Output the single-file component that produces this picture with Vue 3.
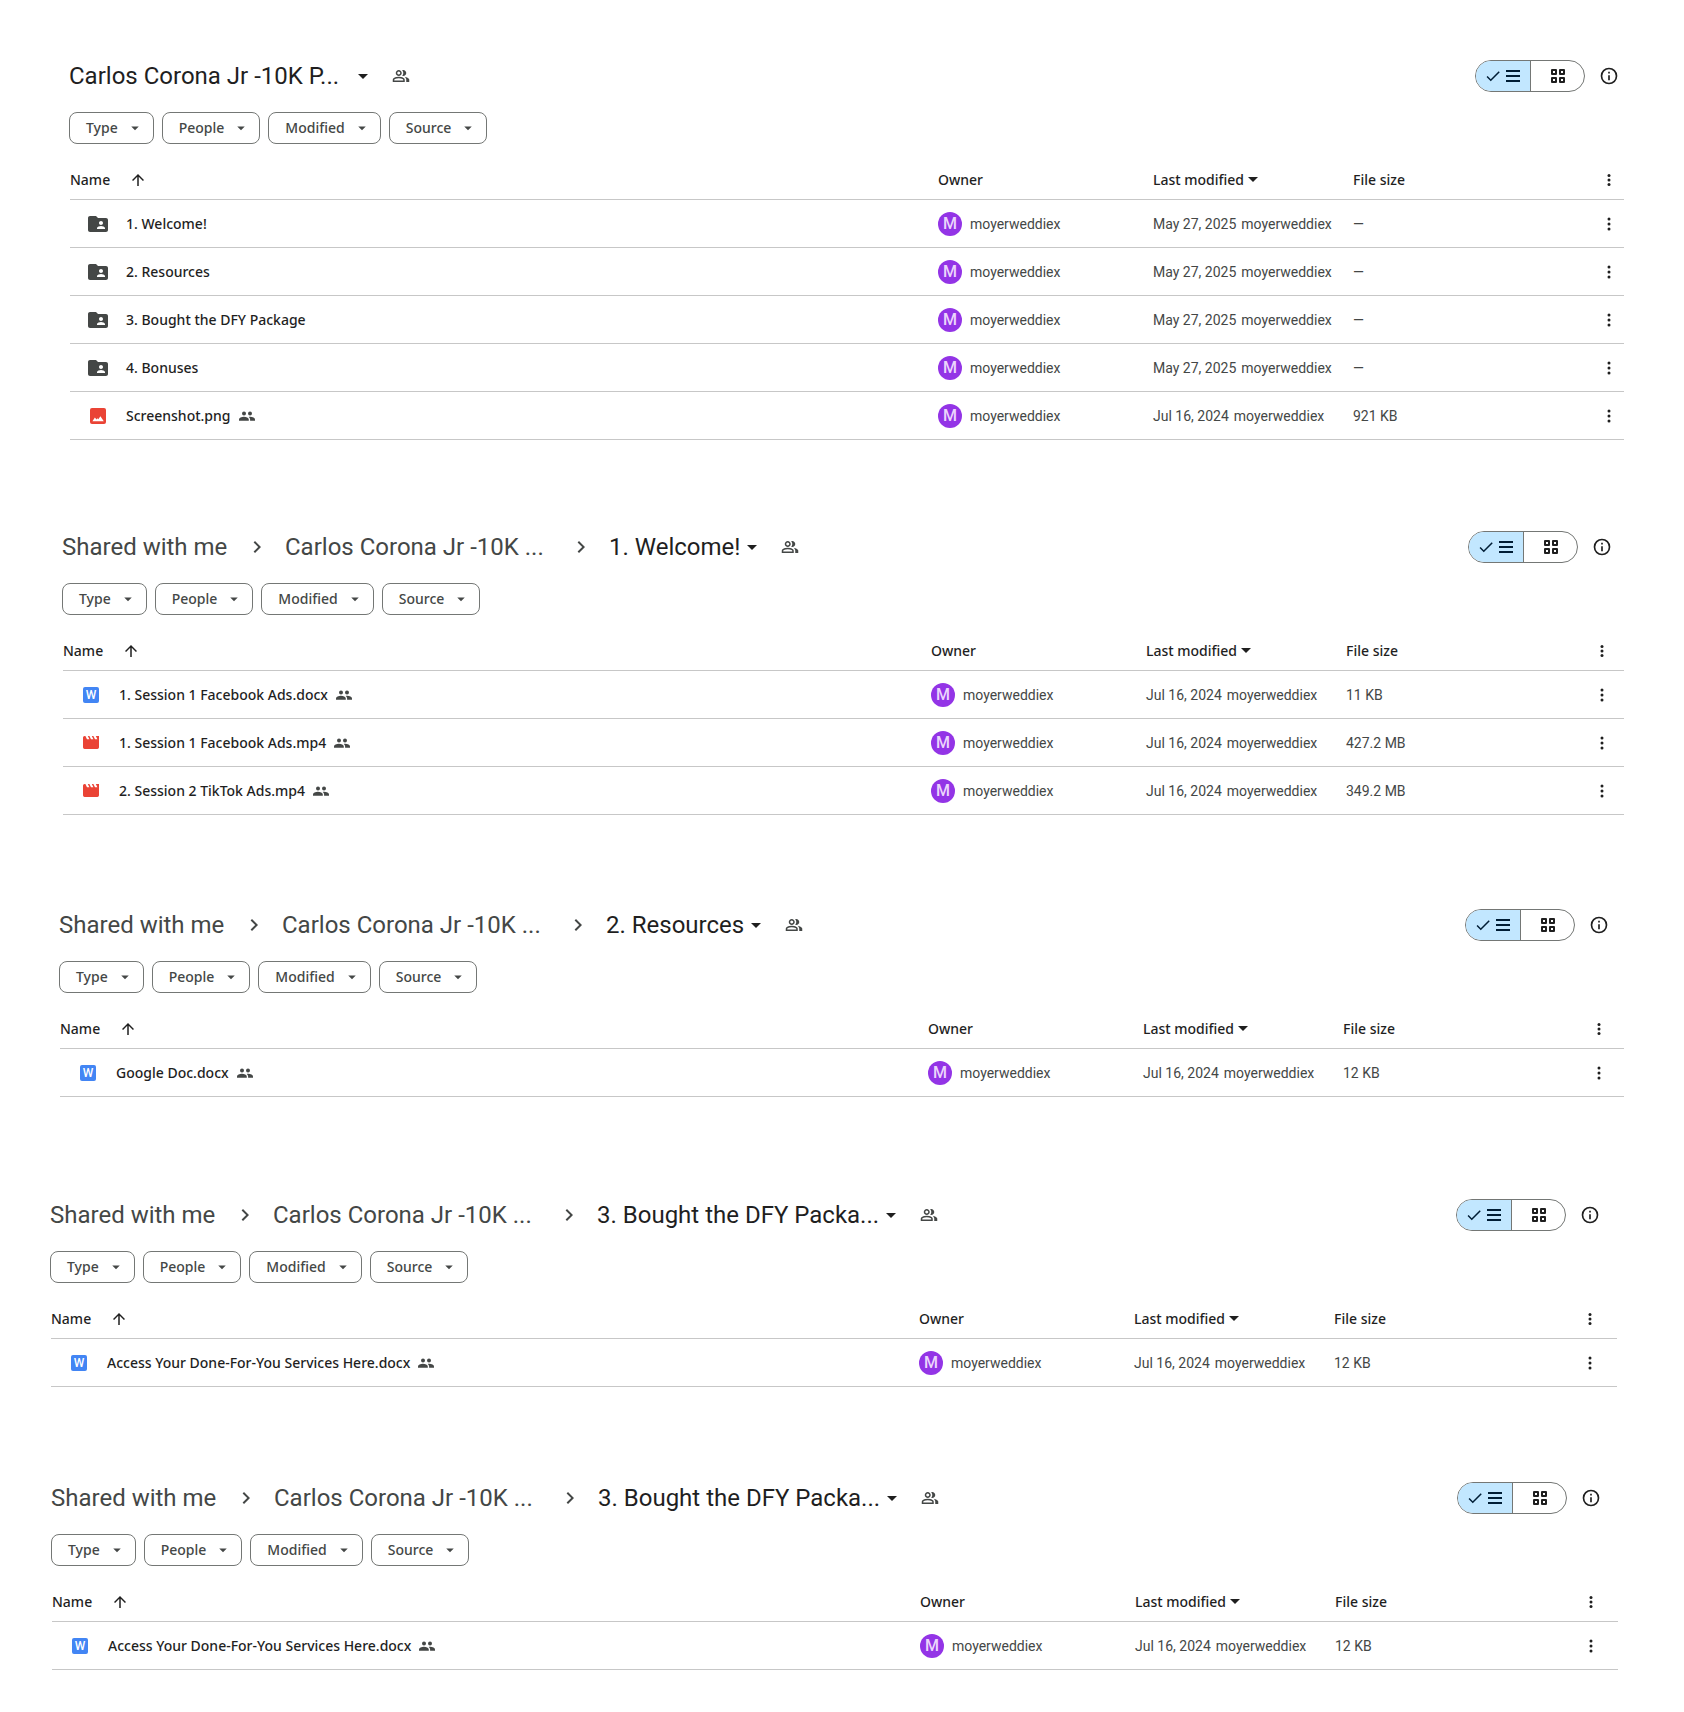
<script setup>
const filters = ['Type', 'People', 'Modified', 'Source']
const root = ['Shared with me', 'Carlos Corona Jr -10K ...']

const folder = (name) => ({ kind: 'folder', name, date: 'May 27, 2025', size: '—' })
const file = (kind, name, size) => ({ kind, name, date: 'Jul 16, 2024', size, shared: true })

const panels = [
  {
    id: 'home', path: [], title: 'Carlos Corona Jr -10K P...',
    rows: [
      folder('1. Welcome!'),
      folder('2. Resources'),
      folder('3. Bought the DFY Package'),
      folder('4. Bonuses'),
      file('image', 'Screenshot.png', '921 KB')
    ]
  },
  {
    id: 'welcome', path: root, title: '1. Welcome!',
    rows: [
      file('word', '1. Session 1 Facebook Ads.docx', '11 KB'),
      file('video', '1. Session 1 Facebook Ads.mp4', '427.2 MB'),
      file('video', '2. Session 2 TikTok Ads.mp4', '349.2 MB')
    ]
  },
  { id: 'resources', path: root, title: '2. Resources', rows: [file('word', 'Google Doc.docx', '12 KB')] },
  {
    id: 'package', path: root, title: '3. Bought the DFY Packa...',
    rows: [file('word', 'Access Your Done-For-You Services Here.docx', '12 KB')]
  },
  {
    id: 'bonuses', path: root, title: '3. Bought the DFY Packa...',
    rows: [file('word', 'Access Your Done-For-You Services Here.docx', '12 KB')]
  }
]
</script>

<template>
  <main class="page">
    <section v-for="p in panels" :key="p.id" class="panel" :class="p.id">
      <header class="bar">
        <nav class="crumbs" aria-label="Folder path">
          <template v-for="c in p.path" :key="c">
            <a href="#" class="crumb">{{ c }}</a>
            <svg class="chevron" viewBox="0 0 24 24" aria-hidden="true"><path d="M10 6 8.6 7.4l4.6 4.6-4.6 4.6L10 18l6-6z" /></svg>
          </template>
          <button type="button" class="current">
            <span class="title">{{ p.title }}</span>
            <svg viewBox="0 0 24 24" width="24" height="24" aria-hidden="true"><path d="m7 10 5 5 5-5z" /></svg>
          </button>
          <button type="button" class="share" aria-label="Manage access">
            <svg viewBox="0 0 24 24" width="18" height="18" aria-hidden="true"><path d="M1 20v-2.8q0-.85.438-1.562T2.6 14.55q1.55-.775 3.15-1.162T9 13t3.25.388 3.15 1.162q.725.375 1.163 1.088T17 17.2V20zm18 0v-3q0-1.1-.612-2.113T16.65 13.15q1.275.15 2.4.513t2.1.887q.9.5 1.375 1.112T23 17v3zM9 12q-1.65 0-2.825-1.175T5 8t1.175-2.825T9 4t2.825 1.175T13 8t-1.175 2.825T9 12m10-4q0 1.65-1.175 2.825T15 12q-.275 0-.7-.062t-.7-.138q.675-.8 1.038-1.775T15 8t-.362-2.025T13.6 4.2q.35-.125.7-.163T15 4q1.65 0 2.825 1.175T19 8M3 18h12v-.8q0-.275-.137-.5t-.363-.35q-1.35-.675-2.725-1.012T9 15t-2.775.338T3.5 16.35q-.225.125-.363.35T3 17.2zm6-8q.825 0 1.413-.587T11 8t-.587-1.412T9 6t-1.412.588T7 8t.588 1.413T9 10" /></svg>
          </button>
        </nav>
        <div class="tools">
          <div class="toggle" role="group" aria-label="Layout">
            <button type="button" class="on" aria-label="List layout" aria-pressed="true">
              <svg viewBox="0 0 24 24" width="18" height="18" aria-hidden="true"><path d="M9 16.17 4.83 12l-1.42 1.41L9 19 21 7l-1.41-1.41z" /></svg>
              <svg viewBox="0 0 18 18" width="18" height="18" aria-hidden="true"><path d="M2 3h14v2H2zm0 5h14v2H2zm0 5h14v2H2z" /></svg>
            </button>
            <button type="button" class="off" aria-label="Grid layout" aria-pressed="false">
              <svg viewBox="0 0 14 14" width="14" height="14" fill="none" stroke="currentColor" stroke-width="2" stroke-linejoin="round" aria-hidden="true"><path d="M1 1h4v4H1zM9 1h4v4H9zM1 9h4v4H1zM9 9h4v4H9z" /></svg>
            </button>
          </div>
          <button type="button" class="icon" aria-label="View details">
            <svg viewBox="0 0 24 24" width="20" height="20" aria-hidden="true"><path d="M11 7h2v2h-2zm0 4h2v6h-2zm1-9a10 10 0 1 0 0 20 10 10 0 0 0 0-20m0 18a8 8 0 1 1 0-16 8 8 0 0 1 0 16" /></svg>
          </button>
        </div>
      </header>

      <div class="chips">
        <button v-for="f in filters" :key="f" type="button" class="chip">
          {{ f }}
          <svg viewBox="0 0 24 24" width="18" height="18" aria-hidden="true"><path d="m7 10 5 5 5-5z" /></svg>
        </button>
      </div>

      <div class="listing">
        <table class="files">
          <colgroup>
            <col />
            <col class="col-owner" />
            <col class="col-date" />
            <col class="col-size" />
            <col class="col-menu" />
          </colgroup>
          <thead>
            <tr>
              <th scope="col">
                <div class="head name-head">
                  Name
                  <svg viewBox="0 0 24 24" width="18" height="18" aria-hidden="true"><path d="m4 12 1.41 1.41L11 7.83V20h2V7.83l5.58 5.59L20 12l-8-8z" /></svg>
                </div>
              </th>
              <th scope="col">Owner</th>
              <th scope="col">
                <div class="head">
                  Last modified
                  <svg viewBox="0 0 10 5" width="10" height="5" aria-hidden="true"><path d="m0 0 5 5 5-5z" /></svg>
                </div>
              </th>
              <th scope="col">File size</th>
              <th scope="col">
                <button type="button" class="icon" aria-label="Table options">
                  <svg viewBox="0 0 18 18" width="18" height="18" aria-hidden="true"><circle cx="9" cy="4.5" r="1.5" /><circle cx="9" cy="9" r="1.5" /><circle cx="9" cy="13.5" r="1.5" /></svg>
                </button>
              </th>
            </tr>
          </thead>
          <tbody>
            <tr v-for="r in p.rows" :key="r.name">
              <td>
                <div class="file">
                  <span class="kind">
                    <svg v-if="r.kind === 'folder'" viewBox="0 0 24 24" width="24" height="24" fill="#444746" aria-hidden="true"><path d="M20 6h-8l-2-2H4c-1.1 0-1.99.9-1.99 2L2 18c0 1.1.9 2 2 2h16c1.1 0 2-.9 2-2V8c0-1.1-.9-2-2-2zm-5 3c1.1 0 2 .9 2 2s-.9 2-2 2-2-.9-2-2 .9-2 2-2zm4 8h-8v-1c0-1.33 2.67-2 4-2s4 .67 4 2v1z" /></svg>
                    <svg v-else-if="r.kind === 'image'" viewBox="0 0 16 16" width="16" height="16" aria-hidden="true"><rect width="16" height="16" rx="2" fill="#ea4335" /><path d="M2.4 13.2 4.9 9.6l1.6 1.8.9-1.2.9 1 2.1-2.9 3.4 4.9z" fill="#fff" /></svg>
                    <svg v-else-if="r.kind === 'video'" viewBox="2 4 20 16" width="16" height="13" fill="#ea4335" aria-hidden="true"><path d="m18 4 2 4h-3l-2-4h-2l2 4h-3l-2-4H8l2 4H7L5 4H4c-1.1 0-1.99.9-1.99 2L2 18c0 1.1.9 2 2 2h16c1.1 0 2-.9 2-2V4z" /></svg>
                    <span v-else class="word" aria-hidden="true">W</span>
                  </span>
                  <a href="#" class="name">{{ r.name }}</a>
                  <svg v-if="r.shared" class="shared" viewBox="0 0 16 16" width="16" height="16" role="img" aria-label="Shared"><circle cx="5" cy="5.4" r="2" /><circle cx="11" cy="5.4" r="2" /><path d="M0 12.8v-1.3C0 9.8 2.6 8.8 4.9 8.8s4.9 1 4.9 2.7v1.3zM11.1 12.8v-1.4c0-1-.5-1.8-1.4-2.5 3-.5 6.3.7 6.3 2.6v1.3z" /></svg>
                </div>
              </td>
              <td>
                <div class="owner"><span class="avatar" aria-hidden="true">M</span>moyerweddiex</div>
              </td>
              <td><div class="date"><span>{{ r.date }}</span><span>moyerweddiex</span></div></td>
              <td>{{ r.size }}</td>
              <td>
                <button type="button" class="icon" aria-label="More actions">
                  <svg viewBox="0 0 20 20" width="20" height="20" aria-hidden="true"><circle cx="10" cy="5" r="1.5" /><circle cx="10" cy="10" r="1.5" /><circle cx="10" cy="15" r="1.5" /></svg>
                </button>
              </td>
            </tr>
          </tbody>
        </table>
      </div>
    </section>
  </main>
</template>

<style>
body {
  background: #fff;
}
</style>

<style scoped>
.page {
  box-sizing: border-box;
  padding: 60px 0 42px;
  font: 400 14px/20px Roboto, "Noto Sans", sans-serif;
  color: #444746;
}
.page svg {
  display: block;
  flex: none;
}
.page svg:not([fill]) {
  fill: currentColor;
}

/* --tail is the space right of the centre of the last icon column */
.panel {
  --tail: 27px;
  margin: 0 60px 91px 69px;
}
.home { --tail: 15px; }
.welcome { --tail: 22px; margin: 0 60px 94px 62px; }
.resources { --tail: 25px; margin: 0 60px 102px 59px; }
.package { margin: 0 67px 95px 50px; }
.bonuses { margin: 0 66px 0 51px; }

button {
  margin: 0;
  padding: 0;
  border: 0;
  background: none;
  font: inherit;
  color: inherit;
  cursor: pointer;
}
a {
  color: inherit;
  text-decoration: none;
}

.bar {
  display: flex;
  align-items: center;
  justify-content: space-between;
  height: 32px;
  padding-right: calc(var(--tail) - 12px);
}
.crumbs {
  display: flex;
  align-items: center;
  font-size: 24px;
  line-height: 32px;
  white-space: nowrap;
}
.crumb {
  min-width: 167px;
}
.crumb ~ .crumb {
  min-width: 268px;
}
.chevron {
  width: 24px;
  height: 24px;
  margin: 0 16px;
}
.current {
  display: flex;
  align-items: center;
  color: #1f1f1f;
}
.home .title {
  min-width: 282px;
  text-align: left;
}
.share {
  margin-left: 17px;
}
.tools {
  display: flex;
  align-items: center;
  gap: 12px;
}
.icon {
  display: flex;
  align-items: center;
  justify-content: center;
  width: 24px;
  height: 24px;
  color: #1f1f1f;
}
.toggle {
  display: flex;
  box-sizing: border-box;
  width: 110px;
  height: 32px;
  border: 1px solid #747775;
  border-radius: 16px;
  overflow: hidden;
}
.toggle button {
  display: flex;
  align-items: center;
  justify-content: center;
  gap: 2px;
}
.on {
  width: 54px;
  background: #c2e7ff;
  color: #001d35;
}
.toggle .off {
  flex: 1;
  border-left: 1px solid #747775;
  color: #1f1f1f;
}

.chips {
  display: flex;
  gap: 8px;
  margin: 20px 0 16px;
}
.chip {
  display: flex;
  align-items: center;
  gap: 8px;
  height: 32px;
  padding: 0 9px 0 16px;
  border: 1px solid #747775;
  border-radius: 8px;
  font-family: "Noto Sans", sans-serif;
  font-weight: 500;
}

.listing {
  padding-left: 1px;
}
.files {
  width: 100%;
  table-layout: fixed;
  border-collapse: separate;
  border-spacing: 0;
}
.col-owner { width: 215px; }
.col-date { width: 200px; }
.col-size { width: 244px; }
.col-menu { width: calc(var(--tail) + 12px); }
th,
td {
  box-sizing: border-box;
  padding: 0;
  border-bottom: 1px solid #c7c7c7;
  text-align: left;
  vertical-align: middle;
  white-space: nowrap;
}
th {
  height: 40px;
  font-family: "Noto Sans", sans-serif;
  font-weight: 500;
  color: #1f1f1f;
}
td {
  height: 48px;
}
.head {
  display: flex;
  align-items: center;
  gap: 4px;
}
.name-head {
  gap: 19px;
}
.file {
  display: flex;
  align-items: center;
  padding-left: 16px;
}
.kind {
  display: flex;
  align-items: center;
  justify-content: center;
  width: 24px;
  height: 24px;
  margin-right: 16px;
}
.word {
  width: 16px;
  height: 16px;
  border-radius: 2px;
  background: #4285f4;
  color: #fff;
  font-size: 12px;
  font-weight: 500;
  line-height: 16px;
  text-align: center;
}
.name {
  font-family: "Noto Sans", sans-serif;
  font-weight: 500;
  color: #1f1f1f;
}
.shared {
  margin-left: 8px;
}
.owner {
  display: flex;
  align-items: center;
  gap: 8px;
}
.avatar {
  width: 24px;
  height: 24px;
  border-radius: 50%;
  background: #9334e6;
  color: #ecd6fc;
  font-size: 16px;
  font-weight: 500;
  line-height: 24px;
  text-align: center;
}
.date {
  display: flex;
  gap: 5px;
}
</style>
